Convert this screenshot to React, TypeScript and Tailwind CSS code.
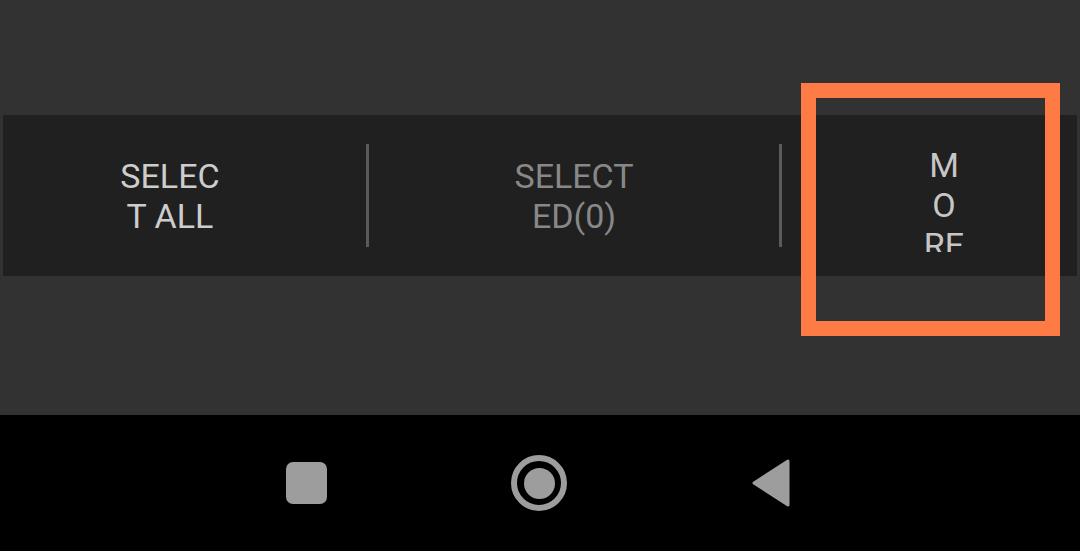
import React from "react";

export default function App() {
  const font = { fontFamily: "Roboto, 'Noto Sans', sans-serif" };
  return (
    <div className="relative w-[1080px] h-[551px] bg-[#323232] overflow-hidden" style={font}>
      <div className="h-[115px]" />
      <div className="ml-[3px] w-[1074px] h-[161px] bg-[#202020] flex items-center">
        <div className="w-[363px] h-full flex items-center justify-center pr-[29px]">
          <div className="text-[34px] leading-[40px] text-center text-[#cdcdcd]">
            <div>SELEC</div>
            <div>T ALL</div>
          </div>
        </div>
        <div className="w-[3px] h-[103px] bg-[#5a5a5a]" />
        <div className="w-[410px] h-full flex items-center justify-center">
          <div className="text-[34px] leading-[40px] text-center text-[#888888]">
            <div>SELECT</div>
            <div>ED(0)</div>
          </div>
        </div>
        <div className="w-[3px] h-[103px] bg-[#5a5a5a]" />
        <div className="flex-1 h-full flex flex-col items-center pt-[30px] pl-[29px]">
          <div className="h-[107px] overflow-hidden text-[34px] leading-[40px] text-center text-[#c6c6c6]">
            <div>M</div>
            <div>O</div>
            <div>RE</div>
          </div>
        </div>
      </div>
      <div className="h-[139px]" />
      <div className="h-[136px] bg-black flex items-center pl-[286px]">
        <div className="w-[41px] h-[42px] rounded-[7px] bg-[#9d9d9d]" />
        <div className="ml-[184px] w-[56px] h-[56px] rounded-full border-[6px] border-[#9d9d9d] flex items-center justify-center">
          <div className="w-[31px] h-[31px] rounded-full bg-[#9d9d9d]" />
        </div>
        <svg className="ml-[185px]" width="38" height="48" viewBox="0 0 38 48">
          <polygon points="36,2 2,24 36,46" fill="#9d9d9d" stroke="#9d9d9d" strokeWidth="3" strokeLinejoin="round" />
        </svg>
      </div>
      <div className="absolute left-[801px] top-[83px] w-[259px] h-[253px] border-[15px] border-[#ff7b45]" />
    </div>
  );
}
